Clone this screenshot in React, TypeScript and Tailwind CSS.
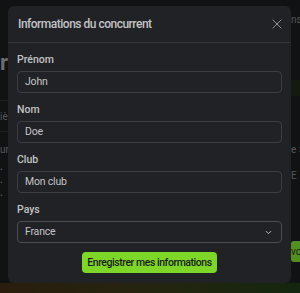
import { X, ChevronDown } from 'lucide-react';

function Field({ label, value }: { label: string; value: string }) {
  return (
    <div className="flex flex-col">
      <label className="mb-[3px] text-[10.5px] font-medium leading-[16px] text-[#c1c2c5]">{label}</label>
      <div className="flex h-[22px] items-center rounded-[4px] border border-[#3c3e44] px-[7px] text-[10.5px] tracking-[-0.2px] text-[#c1c2c5]">
        {value}
      </div>
    </div>
  );
}

export default function App() {
  return (
    <div className="relative h-[293px] w-[300px] overflow-hidden bg-[#111214]" style={{ fontFamily: 'Roboto, "Noto Sans", sans-serif' }}>
      {/* dimmed page behind the modal */}
      <div className="flex h-full flex-col">
        <div className="flex h-[283px]">
          <div className="flex w-[10px] flex-col pt-[52px] text-[#6b6d70]">
            <div className="text-[22px] font-bold leading-[22px]">r</div>
            <div className="mt-[26px] h-[32px] border-y border-[#1c1d20] text-[10px] leading-[32px] text-[#55575a]">iè</div>
            <div className="mt-[10px] text-[10px] text-[#55575a]">ur</div>
            <div className="mt-[10px] flex flex-col gap-[7px] text-[8px] leading-[6px] text-[#55575a]">
              <span>•</span>
              <span>•</span>
              <span>•</span>
            </div>
          </div>
          <div className="flex-1" />
          <div className="flex w-[9px] flex-col overflow-hidden pt-[14px] text-[10px] text-[#55575a]">
            <div className="whitespace-nowrap leading-[12px]">ns</div>
            <div className="mt-[54px] h-[16px] bg-[#121a12]" />
            <div className="mt-[48px] whitespace-nowrap leading-[12px]">e ×</div>
            <div className="mt-[14px] leading-[12px]">E</div>
            <div className="mt-[59px] h-[21px] whitespace-nowrap rounded-l-[3px] bg-[#528f20] text-[10px] leading-[21px] text-[#1a2410]">vo</div>
          </div>
        </div>
        <div className="h-[10px] bg-gradient-to-r from-[#2a1d0d] via-[#25250f] to-[#13260f]" />
      </div>

      {/* modal */}
      <div className="absolute left-[8px] top-[6px] flex h-[277px] w-[283px] flex-col rounded-[6px] bg-[#212226]">
        <div className="flex h-[37px] items-center justify-between border-b border-[#33353a] pl-[10px] pr-[6px]">
          <h2 className="text-[12px] font-medium tracking-[-0.5px] text-[#c1c2c5]">Informations du concurrent</h2>
          <X size={16} strokeWidth={1.5} className="text-[#909296]" />
        </div>
        <div className="flex flex-col gap-[9px] px-[9px] pt-[9px]">
          <Field label="Prénom" value="John" />
          <Field label="Nom" value="Doe" />
          <Field label="Club" value="Mon club" />
          <div className="flex flex-col">
            <label className="mb-[3px] text-[10.5px] font-medium leading-[16px] text-[#c1c2c5]">Pays</label>
            <div className="flex h-[22px] items-center justify-between rounded-[4px] border border-[#4a4c52] pl-[7px] pr-[8px] text-[10.5px] tracking-[-0.2px] text-[#c1c2c5]">
              France
              <ChevronDown size={9} strokeWidth={2.5} className="text-[#c1c2c5]" />
            </div>
          </div>
          <button className="mx-auto h-[21px] w-[135px] rounded-[4px] bg-[#7ed628] text-[10.5px] font-medium tracking-[-0.45px] text-[#1a1b1e]">
            Enregistrer mes informations
          </button>
        </div>
      </div>
    </div>
  );
}
